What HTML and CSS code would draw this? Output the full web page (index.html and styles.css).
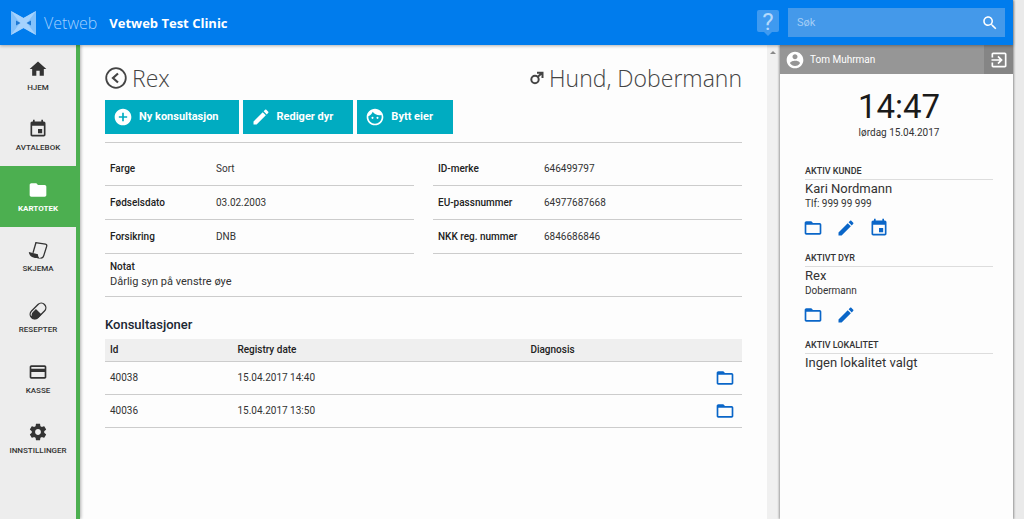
FILE: index.html
```html
<!DOCTYPE html>
<html lang="nb">
<head>
<meta charset="utf-8">
<meta name="viewport" content="width=device-width, initial-scale=1">
<title>Vetweb – Rex</title>
<link rel="stylesheet" href="styles.css">
</head>
<body>
<svg class="sprite" aria-hidden="true">
  <symbol id="home" viewBox="0 0 24 24"><path d="M10 20v-6h4v6h5v-8h3L12 3 2 12h3v8z"/></symbol>
  <symbol id="event" viewBox="0 0 24 24"><path d="M17 12h-5v5h5v-5zM16 1v2H8V1H6v2H5c-1.110 0-1.990.9-1.990 2L3 19c0 1.100.890 2 2 2h14c1.100 0 2-.9 2-2V5c0-1.100-.9-2-2-2h-1V1h-2zm3 18H5V8h14v11z"/></symbol>
  <symbol id="folder" viewBox="0 0 24 24"><path d="M10 4H4c-1.100 0-1.990.9-1.990 2L2 18c0 1.100.9 2 2 2h16c1.100 0 2-.9 2-2V8c0-1.100-.9-2-2-2h-8l-2-2z"/></symbol>
  <symbol id="folder-open" viewBox="0 0 24 24"><path d="M20 6h-8l-2-2H4c-1.100 0-1.990.9-1.990 2L2 18c0 1.100.9 2 2 2h16c1.100 0 2-.9 2-2V8c0-1.100-.9-2-2-2zm0 12H4V8h16v10z"/></symbol>
  <symbol id="edit" viewBox="0 0 24 24"><path d="M3 17.250V21h3.750L17.810 9.940l-3.750-3.750L3 17.250zM20.710 7.040c.390-.390.390-1.020 0-1.410l-2.340-2.340c-.390-.390-1.020-.390-1.410 0l-1.830 1.830 3.750 3.750 1.830-1.830z"/></symbol>
  <symbol id="card" viewBox="0 0 24 24"><path d="M20 4H4c-1.110 0-1.990.890-1.990 2L2 18c0 1.110.890 2 2 2h16c1.110 0 2-.890 2-2V6c0-1.110-.890-2-2-2zm0 14H4v-6h16v6zm0-10H4V6h16v2z"/></symbol>
  <symbol id="settings" viewBox="0 0 24 24"><path d="M19.430 12.980c.040-.320.070-.640.070-.980s-.030-.660-.070-.980l2.110-1.650c.190-.150.240-.420.120-.640l-2-3.460c-.120-.220-.390-.3-.610-.220l-2.490 1c-.520-.4-1.080-.730-1.690-.980l-.380-2.650C14.460 2.180 14.250 2 14 2h-4c-.250 0-.460.180-.490.420l-.380 2.650c-.610.250-1.170.590-1.690.980l-2.490-1c-.230-.090-.490 0-.610.220l-2 3.460c-.130.220-.070.490.120.640l2.110 1.650c-.040.320-.070.650-.070.980s.030.660.070.980l-2.110 1.650c-.190.150-.240.420-.120.640l2 3.460c.120.220.390.3.610.220l2.490-1c.520.4 1.080.730 1.690.980l.380 2.650c.030.240.240.420.490.420h4c.250 0 .460-.180.490-.420l.380-2.650c.610-.250 1.170-.590 1.690-.980l2.490 1c.230.090.490 0 .610-.220l2-3.460c.120-.220.070-.490-.120-.640l-2.110-1.650zM12 15.500c-1.930 0-3.500-1.570-3.500-3.500s1.570-3.500 3.500-3.500 3.500 1.570 3.500 3.500-1.570 3.500-3.500 3.500z"/></symbol>
  <symbol id="account" viewBox="0 0 24 24"><path d="M12 2C6.480 2 2 6.480 2 12s4.480 10 10 10 10-4.480 10-10S17.520 2 12 2zm0 3c1.660 0 3 1.340 3 3s-1.340 3-3 3-3-1.340-3-3 1.340-3 3-3zm0 14.200c-2.500 0-4.710-1.280-6-3.220.030-1.990 4-3.080 6-3.080 1.990 0 5.970 1.090 6 3.080-1.290 1.940-3.500 3.220-6 3.220z"/></symbol>
  <symbol id="exit" viewBox="0 0 24 24"><path d="M10.090 15.590L11.500 17l5-5-5-5-1.410 1.410L12.670 11H3v2h9.670l-2.580 2.590zM19 3H5c-1.110 0-2 .9-2 2v4h2V5h14v14H5v-4H3v4c0 1.100.890 2 2 2h14c1.100 0 2-.9 2-2V5c0-1.100-.9-2-2-2z"/></symbol>
  <symbol id="search" viewBox="0 0 24 24"><path d="M15.500 14h-.790l-.280-.270C15.410 12.590 16 11.110 16 9.500 16 5.910 13.090 3 9.500 3S3 5.910 3 9.500 5.910 16 9.500 16c1.610 0 3.090-.590 4.230-1.570l.270.280v.790l5 4.990L20.490 19l-4.990-5zm-6 0C7.010 14 5 11.990 5 9.500S7.010 5 9.500 5 14 7.010 14 9.500 11.990 14 9.500 14z"/></symbol>
  <symbol id="add" viewBox="0 0 24 24"><path d="M12 2C6.480 2 2 6.480 2 12s4.480 10 10 10 10-4.480 10-10S17.520 2 12 2zm5 11h-4v4h-2v-4H7v-2h4V7h2v4h4v2z"/></symbol>
  <symbol id="face" viewBox="0 0 24 24"><path d="M9 11.750a1.250 1.250 0 1 0 0 2.500 1.250 1.250 0 0 0 0-2.500zm6 0a1.250 1.250 0 1 0 0 2.500 1.250 1.250 0 0 0 0-2.500zM12 2C6.480 2 2 6.480 2 12s4.480 10 10 10 10-4.480 10-10S17.520 2 12 2zm0 18c-4.410 0-8-3.590-8-8 0-.290.020-.580.050-.860 2.360-1.050 4.230-2.980 5.210-5.370C11.070 8.330 14.050 10 17.420 10c.780 0 1.530-.090 2.250-.260.210.710.330 1.470.330 2.260 0 4.410-3.590 8-8 8z"/></symbol>
  <symbol id="form" viewBox="0 0 24 24"><path d="M9 3.200 21 5c1.600.3 1.700 1.500 1.300 3L19 18.500c-.7 2.300-2 3.500-4.200 3.200" fill="none" stroke="currentColor" stroke-width="1.600"/><path d="M9.600 3 6 15.500" fill="none" stroke="currentColor" stroke-width="1.600"/><path d="M1 14.500 12 17c-.2 2.500.8 4.300 3 5.400C8 22.500 1.500 20.500 1 14.500z"/></symbol>
  <symbol id="pill" viewBox="0 0 24 24"><g transform="rotate(-45 12 12)"><rect x="1" y="6.500" width="22" height="11" rx="5.500" fill="none" stroke="currentColor" stroke-width="1.600"/><path d="M12 8.500V18H6.500A6 6 0 0 1 1 10l2 .5c.6-1.200 1.800-2 3.500-2z"/></g></symbol>
</svg>
<div class="app">
  <header class="topbar">
    <a class="brand" href="#">
      <svg class="logo" viewBox="0 0 25 24" aria-hidden="true"><path d="M0 0 12.500 7 25 0v24l-12.500-7L0 24z" fill="#83c1fb"/><path d="m0 0 12.500 7L25 0l-9 12 9 12-12.500-7L0 24l9-12z" fill="#a5d2fd"/><path d="m5 9.500 4.500 2.500L5 14.500zm15 0L15.500 12l4.500 2.500z" fill="#1d78d4"/></svg>
      <span>Vetweb</span>
    </a>
    <strong class="clinic">Vetweb Test Clinic</strong>
    <button class="help" type="button" aria-label="Hjelp"><span>?</span></button>
    <form class="search" role="search">
      <input type="search" placeholder="Søk" aria-label="Søk">
      <button type="button" aria-label="Utfør søk"><svg class="icon"><use href="#search"/></svg></button>
    </form>
  </header>
  <div class="body">
    <nav class="sidebar" aria-label="Hovedmeny">
      <div class="menu">
        <a href="#"><svg class="icon"><use href="#home"/></svg>HJEM</a>
        <a href="#"><svg class="icon"><use href="#event"/></svg>AVTALEBOK</a>
        <a href="#" class="active" aria-current="page"><svg class="icon"><use href="#folder"/></svg>KARTOTEK</a>
        <a href="#"><svg class="icon"><use href="#form"/></svg>SKJEMA</a>
        <a href="#"><svg class="icon"><use href="#pill"/></svg>RESEPTER</a>
        <a href="#"><svg class="icon"><use href="#card"/></svg>KASSE</a>
        <a href="#"><svg class="icon"><use href="#settings"/></svg>INNSTILLINGER</a>
      </div>
    </nav>
    <main class="content">
      <div class="heading">
        <button class="back" type="button" aria-label="Tilbake"><svg viewBox="0 0 22 22" fill="none" stroke="currentColor" stroke-width="1.800"><circle cx="11" cy="11" r="9.800"/><path d="m13 6.500-5 4.500 5 4.500" stroke-width="2.200"/></svg></button>
        <h1>Rex</h1>
        <svg class="male" viewBox="0 0 14 14" fill="none" stroke="currentColor" stroke-width="2" aria-label="Hann"><circle cx="5" cy="8.500" r="3.700"/><path d="M7.500 6 12 2M7 1.800h5.500V7"/></svg>
        <h2>Hund, Dobermann</h2>
      </div>
      <div class="actions">
        <button type="button"><svg class="icon"><use href="#add"/></svg>Ny konsultasjon</button>
        <button type="button"><svg class="icon"><use href="#edit"/></svg>Rediger dyr</button>
        <button type="button"><svg class="icon"><use href="#face"/></svg>Bytt eier</button>
      </div>
      <section class="details">
        <dl>
          <div><dt>Farge</dt><dd>Sort</dd></div>
          <div><dt>Fødselsdato</dt><dd>03.02.2003</dd></div>
          <div><dt>Forsikring</dt><dd>DNB</dd></div>
        </dl>
        <dl>
          <div><dt>ID-merke</dt><dd>646499797</dd></div>
          <div><dt>EU-passnummer</dt><dd>64977687668</dd></div>
          <div><dt>NKK reg. nummer</dt><dd>6846686846</dd></div>
        </dl>
      </section>
      <section class="note"><h3>Notat</h3><p>Dårlig syn på venstre øye</p></section>
      <h3 class="list-title">Konsultasjoner</h3>
      <table class="list">
        <thead><tr><th class="col-id">Id</th><th class="col-date">Registry date</th><th>Diagnosis</th><th class="col-open"></th></tr></thead>
        <tbody>
          <tr><td>40038</td><td>15.04.2017 14:40</td><td></td><td><a href="#" aria-label="Åpne 40038"><svg class="icon"><use href="#folder-open"/></svg></a></td></tr>
          <tr><td>40036</td><td>15.04.2017 13:50</td><td></td><td><a href="#" aria-label="Åpne 40036"><svg class="icon"><use href="#folder-open"/></svg></a></td></tr>
        </tbody>
      </table>
    </main>
    <div class="scroll" aria-hidden="true"><i></i></div>
    <aside class="panel">
      <div class="user">
        <svg class="icon"><use href="#account"/></svg><span>Tom Muhrman</span>
        <button type="button" aria-label="Logg ut"><svg class="icon"><use href="#exit"/></svg></button>
      </div>
      <div class="clock"><time class="time">14:47</time><span>lørdag 15.04.2017</span></div>
      <section class="context">
        <h4>AKTIV KUNDE</h4><p class="name">Kari Nordmann</p><p>Tlf: 999 99 999</p>
        <div class="links">
          <a href="#" aria-label="Åpne kunde"><svg class="icon"><use href="#folder-open"/></svg></a>
          <a href="#" aria-label="Rediger kunde"><svg class="icon"><use href="#edit"/></svg></a>
          <a href="#" aria-label="Ny avtale"><svg class="icon"><use href="#event"/></svg></a>
        </div>
      </section>
      <section class="context">
        <h4>AKTIVT DYR</h4><p class="name">Rex</p><p>Dobermann</p>
        <div class="links">
          <a href="#" aria-label="Åpne dyr"><svg class="icon"><use href="#folder-open"/></svg></a>
          <a href="#" aria-label="Rediger dyr"><svg class="icon"><use href="#edit"/></svg></a>
        </div>
      </section>
      <section class="context"><h4>AKTIV LOKALITET</h4><p class="name">Ingen lokalitet valgt</p></section>
    </aside>
  </div>
</div>
</body>
</html>
```
FILE: styles.css
```css
* { box-sizing: border-box; }
body {
  margin: 0;
  padding-right: 11px;
  min-height: 100vh;
  background: #eaeaea;
  color: #333;
  font: 10px/16px Roboto, "Liberation Sans", sans-serif;
}
h1, h2, h3, h4, p, dl, dd { margin: 0; }
a { color: inherit; text-decoration: none; }
button { border: 0; padding: 0; background: none; color: inherit; font: inherit; cursor: pointer; }
.sprite { position: absolute; width: 0; height: 0; }
.icon { display: block; width: 20px; height: 20px; fill: currentColor; flex: none; }

.app {
  display: flex;
  flex-direction: column;
  min-height: 100vh;
  background: #fdfdfd;
  box-shadow: 1px 0 2px rgba(0, 0, 0, .35);
}
.topbar {
  display: flex;
  align-items: center;
  height: 45px;
  padding: 0 8px 0 11px;
  background: #007ced;
  color: #fff;
  box-shadow: 0 1px 3px rgba(0, 0, 0, .3);
  z-index: 1;
}
.brand {
  display: flex;
  align-items: center;
  gap: 8px;
  color: #a3d0ff;
  font: 300 16px/24px "Open Sans", sans-serif;
}
.logo { width: 25px; height: 24px; }
.clinic { margin-left: 12px; font: 700 13px/20px "Open Sans", sans-serif; }
.help {
  position: relative;
  width: 22px;
  height: 22px;
  margin: 0 9px 3px auto;
  border-radius: 2px;
  background: #3f9af0;
  color: #b4d9fc;
  font: 24px/24px Roboto, sans-serif;
}
.help::after {
  content: "";
  position: absolute;
  left: 7px;
  top: 22px;
  border: 4px solid transparent;
  border-top-color: #3f9af0;
  border-bottom: 0;
}
.search { display: flex; align-items: center; width: 217px; height: 29px; padding: 0 6px 0 9px; background: #4499ea; }
.search input {
  flex: 1;
  min-width: 0;
  padding: 0;
  border: 0;
  outline: 0;
  background: none;
  color: #fff;
  font: 11px/16px Roboto, sans-serif;
}
.search input::placeholder { color: #a3cdf6; opacity: 1; }
.search .icon { width: 18px; height: 18px; }

.body { display: flex; flex: 1; }
.sidebar { flex: none; width: 80px; border-right: 4px solid #4caf50; background: #ededed; box-shadow: 1px 0 3px rgba(0, 0, 0, .3); }
.menu { display: grid; grid-template-rows: repeat(7, 1fr); height: 424px; }
.menu a {
  display: flex;
  flex-direction: column;
  align-items: center;
  justify-content: center;
  gap: 3px;
  padding-top: 2px;
  font-size: 8px;
  line-height: 12px;
  font-weight: 500;
  color: #333;
}
.menu .active { background: #4caf50; color: #fff; font-weight: 700; }

.content { flex: 1; min-width: 0; padding: 17px 25px 0; }
.heading { display: flex; align-items: center; height: 31px; color: #444; }
.heading h1, .heading h2 { font: 300 23px/30px "Open Sans", sans-serif; }
.back { width: 22px; height: 22px; margin-right: 5px; }
.back svg { display: block; }
.male { width: 14px; height: 14px; margin: 0 5px 0 auto; }
.actions { display: flex; gap: 4px; padding: 7px 0 8px; border-bottom: 1px solid #ccc; }
.actions button {
  display: flex;
  align-items: center;
  gap: 6px;
  height: 34px;
  padding: 0 20px 0 8px;
  background: #00acc1;
  color: #fff;
  font-size: 11px;
  font-weight: 700;
}
.details { display: grid; grid-template-columns: 1fr 1fr; gap: 19px; padding-top: 9px; }
.details div { display: grid; grid-template-columns: 106px 1fr; padding: 9px 5px 8px; border-bottom: 1px solid #ccc; }
.details dt, .note h3 { font-size: 10px; font-weight: 500; color: #222; }
.note { padding: 5px 5px 6px; border-bottom: 1px solid #ccc; }
.note p { font-size: 11px; }
.note h3 { line-height: 15px; }
.list-title { margin: 19px 0 5px; font-size: 13px; line-height: 18px; font-weight: 500; color: #1b2733; }
.list { width: 100%; table-layout: fixed; border-collapse: collapse; }
.list th, .list td { padding: 0 5px; border-bottom: 1px solid #ccc; text-align: left; }
.list th { height: 22px; background: #efefef; font-weight: 500; color: #222; }
.list td { height: 33px; }
.list .col-id { width: 20%; }
.list .col-date { width: 46%; }
.list .col-open { width: 32px; }
.list a, .links { color: #0a66c8; }

.scroll { flex: none; width: 13px; padding: 6px 3px; background: #f0f0f0; }
.scroll i { display: block; width: 6px; border: 3px solid transparent; border-top: 0; border-bottom: 3px solid #888; }

.panel { flex: none; width: 233px; background: #fdfdfd; box-shadow: -1px 0 2px rgba(0, 0, 0, .35); }
.user { display: flex; align-items: center; gap: 5px; height: 29px; padding-left: 5px; background: #969696; color: #fff; }
.user button { display: grid; place-items: center; width: 29px; height: 29px; margin-left: auto; background: #858585; }
.clock { display: flex; flex-direction: column; align-items: center; padding: 14px 20px 22px 25px; }
.time { font-size: 33px; line-height: 37px; color: #1a1a1a; }
.context { margin: 0 20px 0 25px; }
.context h4 { margin-bottom: 1px; border-bottom: 1px solid #ddd; font-size: 9px; line-height: 16px; font-weight: 500; }
.context .name { font-size: 13px; line-height: 16px; }
.context p { font-size: 10px; line-height: 14px; }
.links { display: flex; gap: 13px; margin-left: -2px; padding: 7px 0 12px; }
```
